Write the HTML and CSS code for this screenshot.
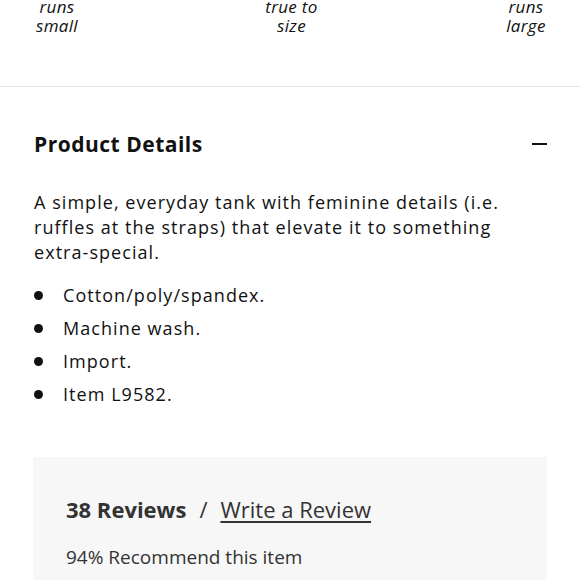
FILE: index.html
```html
<!DOCTYPE html>
<html>
<head>
<meta charset="utf-8">
<link rel="stylesheet" href="styles.css">
</head>
<body>
<div class="fit">
  <span class="fit-label">runs<br>small</span>
  <span class="fit-label">true to<br>size</span>
  <span class="fit-label">runs<br>large</span>
</div>
<section class="details">
  <div class="details-head">
    <h2 class="details-title">Product Details</h2>
    <span class="minus"></span>
  </div>
  <p class="details-text">A simple, everyday tank with feminine details (i.e. ruffles at the straps) that elevate it to something extra-special.</p>
  <ul class="details-list">
    <li>Cotton/poly/spandex.</li>
    <li>Machine wash.</li>
    <li>Import.</li>
    <li>Item L9582.</li>
  </ul>
</section>
<section class="reviews">
  <div class="reviews-head">
    <span class="reviews-count">38 Reviews</span>
    <span class="reviews-sep">/</span>
    <a class="reviews-write" href="#">Write a Review</a>
  </div>
  <div class="reviews-rec">94% Recommend this item</div>
</section>
</body>
</html>
```
FILE: styles.css
```css
html, body {
  margin: 0;
  padding: 0;
  background: #fff;
}
body {
  font-family: "Open Sans", "Liberation Sans", sans-serif;
  color: #111;
  width: 580px;
  overflow: hidden;
}
.fit {
  display: flex;
  justify-content: space-between;
  padding: 0 31px 0 34px;
  margin-top: -3px;
  height: 90px;
  border-bottom: 1px solid #e3e3e3;
  box-sizing: border-box;
}
.fit-label {
  width: 46px;
  text-align: center;
  font-style: italic;
  font-size: 17px;
  line-height: 19px;
  letter-spacing: 0.3px;
  white-space: nowrap;
  display: flex;
  flex-direction: column;
  align-items: center;
}
.details {
  padding: 0 34px;
}
.details-head {
  display: flex;
  justify-content: space-between;
  align-items: center;
  margin-top: 42px;
  height: 30px;
}
.details-title {
  margin: 0;
  font-size: 21px;
  font-weight: 700;
  line-height: 30px;
  letter-spacing: 0.5px;
}
.minus {
  width: 15px;
  height: 2px;
  background: #111;
  margin-right: -1px;
}
.details-text {
  margin: 31px 0 0;
  font-size: 18px;
  line-height: 25px;
  letter-spacing: 1.05px;
}
.details-list {
  list-style: none;
  margin: 14px 0 0;
  padding: 0;
}
.details-list li {
  position: relative;
  padding-left: 29px;
  font-size: 18px;
  line-height: 33px;
  letter-spacing: 1.05px;
}
.details-list li::before {
  content: "";
  position: absolute;
  left: 0;
  top: 12px;
  width: 9px;
  height: 9px;
  border-radius: 50%;
  background: #111;
}
.reviews {
  margin: 46px 33px 0;
  background: #f7f7f7;
  padding: 37px 33px 40px;
  color: #333;
}
.reviews-head {
  display: flex;
  align-items: baseline;
  font-size: 22px;
  line-height: 30px;
}
.reviews-count {
  font-weight: 700;
}
.reviews-sep {
  margin: 0 13px;
}
.reviews-write {
  color: #333;
  text-decoration: underline;
  text-underline-offset: 3px;
}
.reviews-rec {
  margin-top: 21px;
  font-size: 19px;
  line-height: 24px;
}
```
